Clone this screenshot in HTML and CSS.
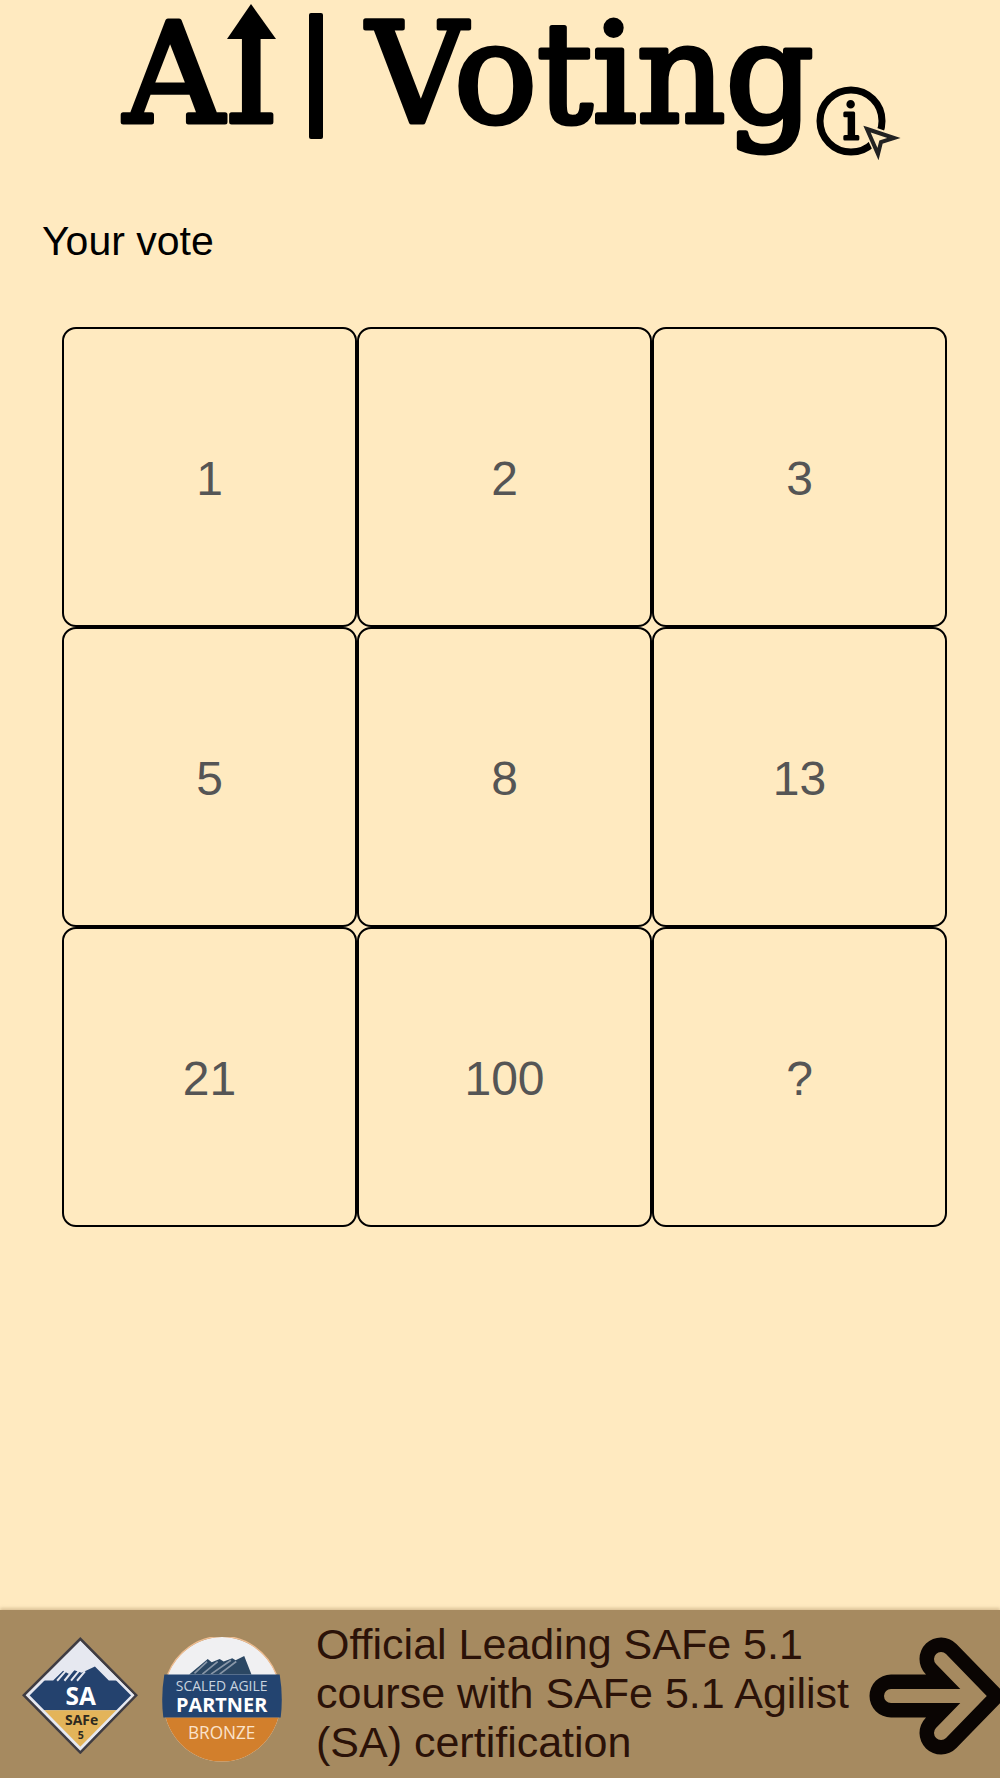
FILE: index.html
```html
<!DOCTYPE html>
<html lang="en">

<head>
    <meta charset="UTF-8">
    <meta name="viewport" content="width=device-width, initial-scale=1.0">
    <title>AI | Voting</title>
    <link rel="stylesheet" href="styles.css">
</head>

<body>
    <header>
        <h1 class="logo">
            <svg viewBox="0 0 1000 170">
                <defs>
                    <clipPath id="stem">
                        <rect x="220" y="36" width="66" height="100" />
                    </clipPath>
                </defs>
                <text class="logo-text" x="124" y="122">A</text>
                <text class="logo-text" x="224" y="122" clip-path="url(#stem)">I</text>
                <path d="M251 4L276 39H227Z" />
                <rect x="309" y="13" width="14" height="126" rx="2" />
                <text class="logo-text" x="367" y="122">Voting</text>
                <circle cx="851" cy="121" r="31" fill="none" stroke="#000" stroke-width="7" />
                <text class="logo-info" x="851" y="139" text-anchor="middle">i</text>
                <path d="M864 126L901 139L884 143L880 160Z" fill="#ffeac0" stroke="#ffeac0" stroke-width="5" />
                <path d="M867 129L894 138L881 142L878 154Z" fill="#ffeac0" stroke="#222" stroke-width="4" />
            </svg>
        </h1>
    </header>

    <main>
        <h2 class="title">Your vote</h2>
        <div class="cards">
            <button type="button">1</button>
            <button type="button">2</button>
            <button type="button">3</button>
            <button type="button">5</button>
            <button type="button">8</button>
            <button type="button">13</button>
            <button type="button">21</button>
            <button type="button">100</button>
            <button type="button">?</button>
        </div>
    </main>

    <a class="banner" href="#course">
        <!-- SAFe Agilist badge -->
        <svg class="badge-sa" viewBox="0 0 350 354">
            <defs>
                <clipPath id="diamond">
                    <path d="M176 18L334 176L176 336L18 176Z" />
                </clipPath>
            </defs>
            <path d="M176 0L350 176L176 354L0 176Z" fill="#3f3c42" />
            <path d="M176 11L339 176L176 343L11 176Z" fill="#e6e8f0" />
            <g clip-path="url(#diamond)">
                <rect width="350" height="354" fill="#e6e8f0" />
                <path d="M0 131H94L124 102L142 112L158 100L180 108L220 89L262 131H350V221H0Z" fill="#24426e" />
                <path d="M106 132L132 102M128 132L156 98M148 132L178 95M166 132L190 104" stroke="#e6e8f0" stroke-width="6" />
                <rect y="221" width="350" height="140" fill="#e3b45a" />
            </g>
            <path d="M176 18L334 176L176 336L18 176Z" fill="none" stroke="#e6e8f0" stroke-width="7" />
            <text class="sa-name" x="177" y="205" text-anchor="middle">SA</text>
            <text class="sa-safe" x="180" y="267" text-anchor="middle">SAFe</text>
            <text class="sa-version" x="177" y="308" text-anchor="middle">5</text>
        </svg>
        <!-- Partner badge -->
        <svg class="badge-partner" viewBox="0 0 362 376">
            <defs>
                <clipPath id="round">
                    <ellipse cx="181" cy="188" rx="178" ry="188" />
                </clipPath>
            </defs>
            <g clip-path="url(#round)">
                <rect width="362" height="376" fill="#f0f0f2" />
                <rect y="242" width="362" height="134" fill="#d27f2c" />
            </g>
            <path d="M17 113A178 188 0 0 1 345 113" fill="none" stroke="#efbd91" stroke-width="4" />
            <path d="M82 113L138 66L150 76L174 66L186 74L212 64L222 70L248 57L270 113Z" fill="#2b4763" />
            <path d="M98 110L136 74M122 112L168 74M148 112L208 70M174 112L224 74" stroke="#8997a8" stroke-width="5" />
            <path d="M7 113H355Q366 178 358 243H4Q-4 178 7 113Z" fill="#234470" />
            <text class="partner-small" x="180" y="164" text-anchor="middle">SCALED AGILE</text>
            <text class="partner-name" x="180" y="227" text-anchor="middle">PARTNER</text>
            <text class="partner-level" x="180" y="309" text-anchor="middle">BRONZE</text>
        </svg>
        <span class="banner-text">Official Leading SAFe 5.1 course with SAFe 5.1 Agilist (SA) certification</span>
        <svg class="arrow" viewBox="0 0 131 118" fill="none" stroke-linecap="round">
            <path d="M22 59H100M72 22L108 59L72 96" stroke="#0a0503" stroke-width="43" />
            <path d="M22 59H100M72 22L108 59L72 96" stroke="#a68a60" stroke-width="14" />
        </svg>
    </a>
</body>

</html>
```

FILE: styles.css
```css
* {
    box-sizing: border-box;
}

body {
    display: flex;
    flex-direction: column;
    min-height: 100vh;
    margin: 0;
    background-color: #ffeac0;
    color: #000;
    font-family: "Liberation Sans", Arial, sans-serif;
}

svg {
    display: block;
}

.logo {
    margin: 0;
}

.logo svg {
    width: 100%;
}

.logo-text,
.logo-info {
    font-family: "DejaVu Serif", serif;
    font-size: 138px;
    font-weight: normal;
    stroke: #000;
    stroke-width: 5px;
    stroke-linejoin: round;
}

.logo-info {
    font-size: 50px;
    stroke-width: 3px;
}

.title {
    margin: 47px 42px 62px;
    font-size: 41px;
    font-weight: normal;
    line-height: 48px;
}

.cards {
    display: grid;
    grid-template-columns: repeat(3, 1fr);
    padding: 0 53px 0 62px;
}

.cards button {
    aspect-ratio: 295 / 300;
    padding: 2px 0 0;
    border: 2px solid #000;
    border-radius: 14px;
    background: none;
    color: #555;
    font-family: inherit;
    font-size: 48px;
    cursor: pointer;
}

.banner {
    display: flex;
    align-items: center;
    margin-top: auto;
    padding: 10px 0 11px 22px;
    background-color: #a68a60;
    box-shadow: 0 -2px 3px rgba(166, 138, 96, 0.4);
    color: #2b1208;
    text-decoration: none;
}

.badge-sa {
    flex: none;
    width: 116px;
    margin-top: 4px;
}

.badge-partner {
    flex: none;
    width: 120px;
    margin: 12px 34px 0 24px;
}

.banner-text {
    flex: 1;
    font-size: 43px;
    line-height: 49px;
}

.arrow {
    flex: none;
    width: 131px;
    margin-top: 4px;
}

.sa-name,
.sa-safe,
.sa-version,
.partner-small,
.partner-name,
.partner-level {
    font-family: "Open Sans", sans-serif;
    fill: #fff;
}

.sa-name {
    font-size: 74px;
    font-weight: bold;
}

.sa-safe,
.sa-version {
    font-size: 42px;
    font-weight: bold;
    fill: #2e2a20;
}

.sa-version {
    font-size: 32px;
}

.partner-small {
    font-size: 42px;
    fill: #c9d3df;
}

.partner-name {
    font-size: 60px;
    font-weight: bold;
}

.partner-level {
    font-size: 52px;
    fill: #fbe3cb;
}
```
